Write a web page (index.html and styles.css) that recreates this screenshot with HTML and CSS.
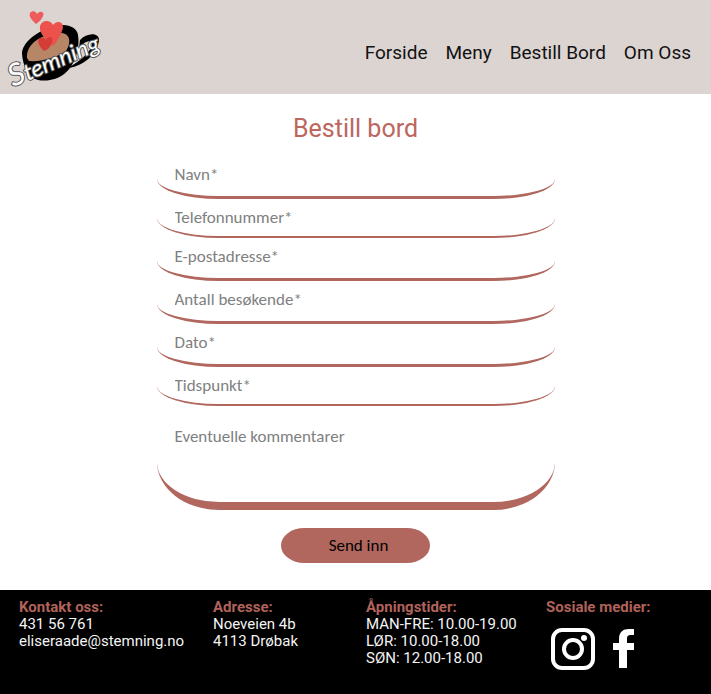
FILE: index.html
```html
<!DOCTYPE html>
<html lang="no">
<head>
<meta charset="utf-8">
<meta name="viewport" content="width=device-width, initial-scale=1">
<title>Stemning – Bestill bord</title>
<link rel="stylesheet" href="styles.css">
</head>
<body>
<header class="site-header">
  <a class="logo" href="#" aria-label="Stemning">
    <svg width="96" height="88" viewBox="0 0 96 88">
      <path d="M16 50C16 38 32 26 50 22C62 19 71 24 72 31C74 42 70 56 64 64C56 75 42 78 32 76C22 74 17 62 16 50Z"/>
      <path d="M74 36C80 29 92 28 93 35C93 47 80 62 62 64C74 57 85 48 86 40C86 36 80 36 73 44Z"/>
      <path d="M21 54C20 40 35 30 53 29C64 28 66 38 60 47C50 54 34 58 23 57Z" fill="#b68667"/>
      <path d="M47 42C37 33 33 28 34 22C36 15 45 16 47 21C51 15 60 18 56 27C54 33 51 38 47 42Z" fill="#ec524b"/>
      <path d="M30 20C24 14 23 12 24 9C26 6 30 7 31 10C34 6 39 8 37 12C36 15 33 18 30 20Z" fill="#ee5c5c"/>
      <path d="M38 47C33 42 31 38 33 35C36 32 39 34 40 36C43 31 48 33 46 38C45 43 41 46 38 47Z" fill="#d53c37"/>
      <text class="logo-text" x="7" y="83" transform="rotate(-23 7 83)"><tspan class="logo-initial">S</tspan>temning</text>
    </svg>
  </a>
  <nav class="nav">
    <a href="#">Forside</a>
    <a href="#">Meny</a>
    <a href="#">Bestill Bord</a>
    <a href="#">Om Oss</a>
  </nav>
</header>
<main class="booking">
  <h1>Bestill bord</h1>
  <form class="form">
    <input class="field" type="text" placeholder="Navn*" aria-label="Navn">
    <input class="field field-thin" type="tel" placeholder="Telefonnummer*" aria-label="Telefonnummer">
    <input class="field" type="email" placeholder="E-postadresse*" aria-label="E-postadresse">
    <input class="field" type="text" placeholder="Antall besøkende*" aria-label="Antall besøkende">
    <input class="field" type="text" placeholder="Dato*" aria-label="Dato">
    <input class="field field-thin" type="text" placeholder="Tidspunkt*" aria-label="Tidspunkt">
    <textarea class="field comments" placeholder="Eventuelle kommentarer" aria-label="Eventuelle kommentarer"></textarea>
    <button class="submit" type="submit">Send inn</button>
  </form>
</main>
<footer class="site-footer">
  <section>
    <h2>Kontakt oss:</h2>
    <p>431 56 761</p>
    <p>eliseraade@stemning.no</p>
  </section>
  <section>
    <h2>Adresse:</h2>
    <p>Noeveien 4b</p>
    <p>4113 Drøbak</p>
  </section>
  <section>
    <h2>Åpningstider:</h2>
    <p>MAN-FRE: 10.00-19.00</p>
    <p>LØR: 10.00-18.00</p>
    <p>SØN: 12.00-18.00</p>
  </section>
  <section>
    <h2>Sosiale medier:</h2>
    <div class="social">
      <a href="#" aria-label="Instagram">
        <svg width="44" height="42" viewBox="0 0 44 42" fill="none" stroke="#fff" stroke-width="4">
          <rect x="2" y="2" width="40" height="38" rx="9"/>
          <circle cx="22" cy="21" r="9"/>
          <circle cx="33" cy="10" r="3" fill="#fff" stroke="none"/>
        </svg>
      </a>
      <a href="#" aria-label="Facebook">
        <svg width="22" height="42" viewBox="0 0 22 42" fill="#fff">
          <path d="M6 40V22H0V15H6V11C6 4 10 1 16 1H21V7H18C15 7 14 8 14 11V15H21V22H14V40Z"/>
        </svg>
      </a>
    </div>
  </section>
</footer>
</body>
</html>
```
FILE: styles.css
```css
* {
  box-sizing: border-box;
}

body {
  margin: 0;
  min-height: 100vh;
  display: flex;
  flex-direction: column;
  background: #fff;
  color: #111;
  font-family: Roboto, sans-serif;
}

a {
  color: inherit;
  text-decoration: none;
}

.site-header {
  display: flex;
  align-items: center;
  justify-content: space-between;
  padding: 4px 20px 2px 6px;
  background: #dcd4d1;
}

.logo svg {
  display: block;
  overflow: visible;
}

.logo-text {
  font-family: Carlito, Calibri, Lato, sans-serif;
  font-size: 24px;
  font-style: italic;
  fill: #fff;
  stroke: #555;
  stroke-width: 2px;
  paint-order: stroke;
}

.logo-initial {
  font-size: 34px;
}

.nav {
  display: flex;
  gap: 18px;
  padding-top: 10px;
  font-size: 19px;
  line-height: 24px;
}

.booking {
  flex: 1;
  padding: 19px 20px 27px;
}

h1 {
  margin: 0 0 11px;
  color: #bd665e;
  font-size: 25px;
  font-weight: 400;
  line-height: 32px;
  text-align: center;
}

.form {
  display: flex;
  flex-direction: column;
  max-width: 398px;
  margin: 0 auto;
}

.field {
  width: 100%;
  height: 43px;
  padding: 0 18px 3px;
  border: 0 solid #b1675e;
  border-bottom-width: 3px;
  border-radius: 0 0 62px 62px / 0 0 20px 20px;
  background: transparent;
  color: #222;
  font: 17px/20px Carlito, Calibri, Lato, sans-serif;
}

.field::placeholder {
  color: #808080;
  opacity: 1;
}

.field-thin {
  height: 39px;
  padding-bottom: 0;
  border-bottom-width: 2px;
}

.comments {
  display: block;
  height: 104px;
  padding-top: 21px;
  border-bottom-width: 8px;
  border-radius: 0 0 62px 62px / 0 0 48px 48px;
  resize: none;
}

.submit {
  align-self: center;
  width: 149px;
  height: 35px;
  margin-top: 18px;
  padding: 0 0 0 6px;
  border: 0;
  border-radius: 24px / 18px;
  background: #b1675e;
  color: #000;
  font: 17px/20px Carlito, Calibri, Lato, sans-serif;
}

.site-footer {
  display: grid;
  grid-template-columns: 194fr 153fr 180fr 146fr;
  padding: 9px 19px 24px;
  background: #000;
  color: #f4f4f4;
  font-size: 15px;
  line-height: 17px;
}

.site-footer h2 {
  margin: 0;
  color: #b1625b;
  font-size: 15px;
  font-weight: 700;
  line-height: 17px;
}

.site-footer p {
  margin: 0;
}

.social {
  display: flex;
  gap: 18px;
  padding: 12px 5px 0;
}

.social svg {
  display: block;
}
```
